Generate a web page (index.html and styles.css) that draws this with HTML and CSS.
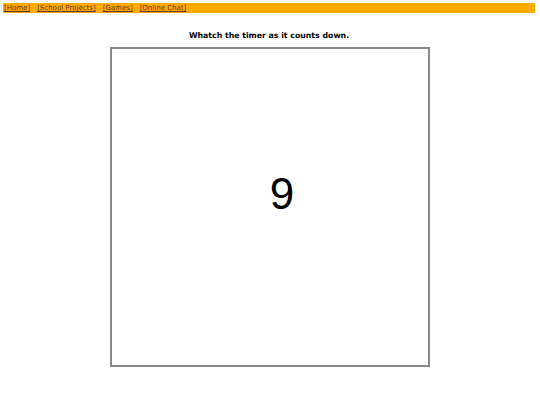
FILE: index.html
```html
<!DOCTYPE html>
<html>
<head>
<meta charset="utf-8">
<title>Timer</title>
<link rel="stylesheet" href="styles.css">
</head>
<body>
<div class="nav">
  <a href="#">[Home]</a>
  <a href="#">[School Projects]</a>
  <a href="#">[Games]</a>
  <a href="#">[Online Chat]</a>
</div>
<h1 class="title">Whatch the timer as it counts down.</h1>
<div class="box">
  <div class="count">9</div>
</div>
</body>
</html>
```
FILE: styles.css
```css
html, body {
  margin: 0;
  padding: 0;
  background: #ffffff;
}
body {
  padding: 3px 5px 0 3px;
  font-family: "DejaVu Sans", Verdana, sans-serif;
}
.nav {
  background: #ffaa00;
  height: 10px;
  padding-left: 1px;
  font-size: 7px;
  line-height: 10px;
  display: flex;
  gap: 7px;
}
.nav a {
  color: #663333;
  text-decoration: underline;
}
.title {
  margin: 18px 0 0 0;
  font-size: 7.8px;
  line-height: 10px;
  font-weight: bold;
  text-align: center;
  color: #000;
}
.box {
  margin: 6px 0 0 107px;
  border: 2px solid #888888;
  box-sizing: content-box;
  display: flex;
  justify-content: center;
  padding-top: 120px;
  height: 196px;
  padding-left: 24px;
  width: 292px;
}
.count {
  font-family: "Liberation Sans", Arial, sans-serif;
  font-size: 44px;
  line-height: 50px;
  color: #000;
}
```
